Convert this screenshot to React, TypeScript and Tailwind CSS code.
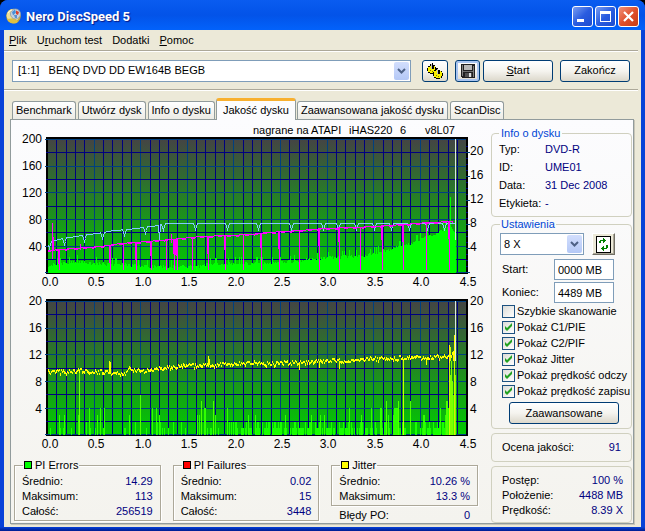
import React, { useState } from 'react';

const PLOT_W = 419;
const PLOT_H = 134;
const STEP = 9.32;

type Point = [number, number];

// small repeatable noise source, so the graphs look the same on every render
function makeNoise(seed: number) {
  let s = seed;
  return () => {
    s = (s * 16807) % 2147483647;
    return s / 2147483647;
  };
}

function interpolate(points: Point[], x: number) {
  for (let i = 1; i < points.length; i++) {
    if (x <= points[i][0]) {
      const [x0, y0] = points[i - 1];
      const [x1, y1] = points[i];
      return y0 + ((y1 - y0) * (x - x0)) / (x1 - x0);
    }
  }
  return points[points.length - 1][1];
}

const ERROR_LEVEL: Point[] = [
  [0, 6], [18, 8], [30, 10], [45, 8], [65, 7], [100, 5], [150, 5], [165, 7], [200, 8], [240, 9], [265, 12],
  [290, 14], [320, 16], [335, 20], [355, 25], [370, 30], [378, 35], [390, 38], [396, 43], [404, 44], [408, 35],
];
const READ_SPEED: Point[] = [
  [1, 103], [15, 99], [35, 96], [56, 93], [66, 91], [80, 90], [96, 88], [111, 86], [118, 84], [408, 84],
];
const READ_DIPS = [2, 17, 37, 55, 77, 98, 116, 148, 180, 211, 244, 276, 291, 309, 327, 344, 362, 380, 397];
const WRITE_SPEED: Point[] = [
  [1, 111], [26, 109], [53, 107], [73, 104], [100, 102], [123, 100], [153, 97], [180, 96], [203, 95], [220, 93],
  [253, 91], [276, 89], [306, 88], [326, 87], [356, 85], [380, 83], [406, 82],
];
const WRITE_DROPS = [12, 63, 76, 89, 104, 119, 127, 130, 145, 161, 178, 196, 214, 232, 252, 272, 292, 313, 335, 356, 379, 402];
const JITTER: Point[] = [
  [1, 71], [26, 71], [33, 69], [50, 71], [73, 73], [76, 74], [82, 68], [96, 71], [113, 67], [136, 65], [170, 64],
  [203, 62], [226, 63], [270, 60], [293, 60], [326, 58], [360, 57], [393, 56], [402, 55], [408, 50],
];
const FAILURES: Point[] = [
  [3, 1], [12, 3], [13, 1], [16, 1], [17, 3], [24, 1], [31, 3], [39, 2], [42, 4], [43, 1], [48, 1], [50, 3], [53, 4],
  [56, 1], [57, 4], [77, 1], [78, 1], [82, 3], [88, 2], [93, 6], [99, 1], [105, 4], [109, 4], [110, 2], [112, 3],
  [113, 2], [115, 1], [117, 1], [121, 1], [126, 2], [134, 2], [138, 1], [150, 3], [152, 3], [154, 5], [157, 4],
  [158, 4], [160, 1], [163, 1], [164, 1], [166, 5], [168, 3], [171, 1], [180, 4], [182, 2], [184, 2], [201, 3],
  [208, 3], [238, 3], [264, 3], [273, 3], [277, 3], [302, 4], [314, 3], [324, 4], [333, 4], [334, 4], [339, 5],
  [341, 3], [346, 3], [347, 4], [348, 4], [349, 4], [350, 4], [351, 5], [363, 5], [376, 3], [377, 3], [393, 4],
  [398, 3], [399, 5], [400, 5], [401, 4], [403, 9], [404, 11], [405, 8], [406, 6], [407, 7], [408, 9],
];

function errorBars() {
  const noise = makeNoise(77);
  let d = '';
  for (let x = 1; x < 409; x++) {
    const n = noise();
    const h = Math.round(interpolate(ERROR_LEVEL, x) + n * 4 + (n > 0.88 ? 4 : 0));
    d += `M${x + 0.5} ${PLOT_H}v-${h}`;
  }
  return d + `M403.5 ${PLOT_H}V58`;
}

function readLine() {
  let d = '';
  for (let x = 1; x < 409; x++) {
    let y = Math.round(interpolate(READ_SPEED, x));
    const dip = READ_DIPS.find((c) => Math.abs(c - x) <= 2);
    if (dip !== undefined) y += dip === x ? 6 : Math.abs(dip - x) === 1 ? 3 : 0;
    if (x === 112) y = 100;
    d += `${x === 1 ? 'M' : 'L'}${x + 0.5} ${y + 0.5}`;
  }
  return d;
}

const writeY = (x: number) => Math.round(interpolate(WRITE_SPEED, x));

function Drops() {
  return (
    <g fill="#ff00ff">
      {WRITE_DROPS.map((x, i) => (
        <g key={x}>
          <rect x={x} y={writeY(x)} width="1" height={131 - writeY(x)} />
          {i % 3 !== 2 && <rect x={x - 1} y={writeY(x)} width="1" height={i % 2 ? 18 : 15} />}
        </g>
      ))}
      <rect x="5" y="84" width="1" height="36" />
      <rect x="6" y="98" width="1" height="14" />
      <rect x="33" y="105" width="1" height="6" />
      <rect x="124" y="95" width="1" height="9" />
      <rect x="128" y="100" width="2" height="16" />
    </g>
  );
}

function WriteLine() {
  const columns = Array.from({ length: 405 }, (_, i) => i + 1);
  return (
    <g fill="#ff00ff">
      {columns.map((x) => (
        <rect key={x} x={x} y={writeY(x)} width="1" height={x % 9 < 4 ? 2 : 1} />
      ))}
    </g>
  );
}

function jitterLine() {
  const noise = makeNoise(501);
  let d = '';
  for (let x = 1; x < 406; x++) {
    const y = Math.round(interpolate(JITTER, x) + (noise() - 0.5) * 4);
    d += `M${x + 0.5} ${y - 1}v${noise() > 0.7 ? 3 : 2}`;
  }
  return d + 'M62.5 73V60M63.5 73V61M161.5 64V55M162.5 64V58M252.5 61V69M272.5 60V67M292.5 60V68M379.5 58V64';
}

const failureList: Point[] = (() => {
  const noise = makeNoise(9);
  const list: Point[] = [];
  for (let x = 184; x < 402; x++) {
    const n = noise();
    if (n > 0.76) list.push([x, 2]);
    else if (n > 0.42) list.push([x, 1]);
  }
  return [...list, ...FAILURES];
})();

const failureColor = (v: number) => (v > 6 ? '#80ff00' : v > 4 ? '#50ff00' : v > 2 ? '#30ff00' : '#18ff00');

function Grid({ id }: { id: string }) {
  const rows = Array.from({ length: 11 }, (_, i) => i);
  const cols = Array.from({ length: 44 }, (_, i) => i + 1);
  return (
    <g shapeRendering="crispEdges">
      <defs>
        <linearGradient id={id} x1="0" y1="0" x2="0" y2="1">
          <stop offset="0" stopColor="#444444" />
          <stop offset="0.5" stopColor="#228822" />
          <stop offset="1" stopColor="#00cc00" />
        </linearGradient>
      </defs>
      <rect x="-1" y="-2" width="422" height="137" fill="#000" />
      <rect x="1" y="0" width={PLOT_W - 1} height={PLOT_H} fill={`url(#${id})`} />
      {cols.map((c) => (
        <rect key={c} x={Math.round(c * STEP)} y="0" width="1" height={PLOT_H} fill={c % 5 === 0 ? '#004080' : '#000080'} />
      ))}
      {rows.map((r) => (
        <rect
          key={r}
          x={r % 2 ? -1 : -2}
          y={Math.min(Math.round(r * 13.35), 133)}
          width={r % 2 ? 420 : 421}
          height="1"
          fill={r % 2 ? '#000080' : '#004080'}
        />
      ))}
    </g>
  );
}

function AxisLabels({ left, right, rightStart, rightStep }: { left: string[]; right: string[]; rightStart: number; rightStep: number }) {
  return (
    <g fontSize="12" fill="#000">
      {left.map((t, i) => (
        <text key={t} x="-5" y={4 + i * 27} textAnchor="end">{t}</text>
      ))}
      {right.map((t, i) => (
        <text key={t} x="423" y={rightStart + i * rightStep}>{t}</text>
      ))}
      {['0.0', '0.5', '1.0', '1.5', '2.0', '2.5', '3.0', '3.5', '4.0', '4.5'].map((t, i) => (
        <text key={t} x={3 + Math.round(i * 46.4)} y="147" textAnchor="middle">{t}</text>
      ))}
    </g>
  );
}

function ErrorsChart() {
  return (
    <svg viewBox="-36 -19 480 169" className="block w-full h-auto" role="img" aria-label="PI Errors">
      <Grid id="bgErrors" />
      <g fill="none" shapeRendering="crispEdges">
        <path d={errorBars()} stroke="#00ff00" />
        <path d={readLine()} stroke="#80c8ff" />
        <WriteLine />
        <Drops />
        <path d="M408.5 0V101" stroke="#d8e8e0" />
        {Array.from({ length: 22 }, (_, i) => (
          <path key={i} d={`M419 ${133.5 - i * 6}h${i % 4 === 0 ? 4 : 2}`} stroke={i % 4 === 0 ? '#004080' : '#000080'} />
        ))}
      </g>
      <g fontSize="11" fill="#000">
        <text x="206" y="-5">nagrane na ATAPI</text>
        <text x="302" y="-5">iHAS220</text>
        <text x="353" y="-5">6</text>
        <text x="378" y="-5">v8L07</text>
      </g>
      <AxisLabels left={['200', '160', '120', '80', '40']} right={['20', '16', '12', '8', '4']} rightStart={16} rightStep={24} />
    </svg>
  );
}

function FailuresChart() {
  return (
    <svg viewBox="-36 -12 480 166" className="block w-full h-auto" role="img" aria-label="PI Failures, Jitter">
      <Grid id="bgFailures" />
      <g fill="none" shapeRendering="crispEdges">
        {failureList.map(([x, v], i) => (
          <path key={i} d={`M${x + 0.5} ${PLOT_H}V${PLOT_H - Math.round(v * 6.7)}`} stroke={failureColor(v)} />
        ))}
        <path d="M32.5 134V68" stroke="#70ff10" />
        <path d="M356.5 134V58M402.5 134V44M403.5 60V46" stroke="#c8ff00" />
        <path d="M407.5 134V34" stroke="#d0f000" />
        <path d={jitterLine()} stroke="#ffff00" />
        <path d="M402.5 62V44M407.5 60V34M406.5 60V50" stroke="#ffff00" />
        <path d="M408.5 0V60" stroke="#d8e8e0" />
      </g>
      <AxisLabels left={['20', '16', '12', '8', '4']} right={['20', '16', '12', '8', '4']} rightStart={4} rightStep={27} />
    </svg>
  );
}

function DiscLogo() {
  return (
    <svg width="16" height="16" viewBox="0 0 16 16" aria-hidden="true">
      <circle cx="7.5" cy="8" r="7.3" fill="#c8a838" />
      <circle cx="7" cy="7.5" r="6.4" fill="#f0e098" />
      <path d="M1 11a7 7 0 0 0 11 3l-3-4z" fill="#e0c040" />
      <circle cx="9.5" cy="6" r="5" fill="#c8d4e0" stroke="#8898a8" strokeWidth="0.8" />
      <path d="M6 4l3-2.5 1 3-3 3z" fill="#4890d8" />
      <path d="M10 2.5l3 1.5-1 3-2-1z" fill="#d84030" />
      <path d="M8 7l3 0 0 3-2 0z" fill="#5890d0" />
      <path d="M2 5a6 6 0 0 1 4-3" stroke="#fffbe0" fill="none" />
    </svg>
  );
}

function DiscsIcon() {
  return (
    <svg width="18" height="16" viewBox="0 0 18 16" shapeRendering="crispEdges" aria-hidden="true">
      <path d="M1 5h1V3h2V1h2V0h1v2h2v2h1v5H9v1H7v1H4v-1H2V8H1z" fill="#000" />
      <path d="M2 4h2V3h1v3h3V3h1v5H8v2H4V9H2z" fill="#f8f000" />
      <path d="M5 1h1v5H5z" fill="#c0c0c0" />
      <path d="M4 7h1v1H4zM6 8h1v1H6z" fill="#807800" />
      <path d="M7 9h1V7h2V5h2v2h2v1h2v2h1v3h-1v2h-2v1h-4v-1H8v-2H7z" fill="#000" />
      <path d="M8 8h2V7h1v4h3V8h1v1h1v4h-1v2h-5v-1H8z" fill="#f8f000" />
      <path d="M11 6h1v5h-1z" fill="#c0c0c0" />
      <path d="M10 12h1v1h-1zM12 13h1v1h-1z" fill="#807800" />
    </svg>
  );
}

function FloppyIcon() {
  return (
    <svg width="14" height="14" viewBox="0 0 14 14" shapeRendering="crispEdges" aria-hidden="true">
      <path d="M0 0h14v14H1l-1-1z" fill="#202020" />
      <path d="M1 1h1v11H1zM12 2h1v11h-1z" fill="#808080" />
      <path d="M3 1h8v5H3z" fill="#b8b8b8" />
      <path d="M2 7h10v1H2z" fill="#707070" />
      <path d="M4 9h7v4H4z" fill="#505050" />
      <path d="M8 9h2v4H8z" fill="#e0e0e0" />
    </svg>
  );
}

function RefreshIcon() {
  return (
    <svg width="15" height="17" viewBox="0 0 15 17" shapeRendering="crispEdges" aria-hidden="true">
      <rect x="0.5" y="0.5" width="14" height="16" fill="#fff" stroke="#000" />
      <path d="M3 7V5h1V4h3V2h1v1h1v1h1v1H9v1H8v1H7V5H5v2z" fill="#008000" />
      <path d="M12 9v3h-1v1H8v2H7v-1H6v-1H5v-1h1v-1h1v-1h1v2h2v-3z" fill="#008000" />
    </svg>
  );
}

function ComboArrow() {
  return (
    <span className="pointer-events-none absolute inset-y-[2px] right-[2px] flex w-[15px] items-center justify-center rounded-xs bg-linear-to-b from-[#d2defd] to-[#b4c8f6]">
      <svg width="9" height="6" viewBox="0 0 9 6" fill="none" aria-hidden="true">
        <path d="M1 1l3.5 3.5L8 1" stroke="#4d6185" strokeWidth="2" />
      </svg>
    </span>
  );
}

const xpButton =
  'flex items-center justify-center rounded-[3px] border border-[#003c74] bg-linear-to-b from-white via-[#f5f4ef] to-[#dcd8cb]';

function InfoRow({ label, value }: { label: string; value: string }) {
  return (
    <div className="flex h-[18px] items-center">
      <dt className="w-[46px]">{label}</dt>
      <dd className="text-[#000080]">{value}</dd>
    </div>
  );
}

function StatRow({ label, value }: { label: string; value: string }) {
  return (
    <div className="flex h-[15px] items-center justify-between">
      <dt>{label}</dt>
      <dd className="text-[#000080]">{value}</dd>
    </div>
  );
}

function StatGroup({ title, swatch, rows }: { title: string; swatch: string; rows: string[][] }) {
  return (
    <fieldset className="min-w-0 border border-[#aca899] px-[7px] pt-[2px] pb-px shadow-[1px_1px_0_#fff,inset_1px_1px_0_#fff]">
      <legend className="ml-px flex items-center gap-[3px] px-px leading-[14px]">
        <span className={`size-2 border border-black ${swatch}`} />
        {title}
      </legend>
      <dl>
        {rows.map(([label, value]) => (
          <StatRow key={label} label={label} value={value} />
        ))}
      </dl>
    </fieldset>
  );
}

const tabs = ['Benchmark', 'Utwórz dysk', 'Info o dysku', 'Jakość dysku', 'Zaawansowana jakość dysku', 'ScanDisc'];

export default function App() {
  const [activeTab, setActiveTab] = useState('Jakość dysku');
  const [start, setStart] = useState('0000 MB');
  const [end, setEnd] = useState('4489 MB');
  const [options, setOptions] = useState([
    { id: 'quick', name: 'Szybkie skanowanie', checked: false },
    { id: 'pie', name: 'Pokaż C1/PIE', checked: true },
    { id: 'pif', name: 'Pokaż C2/PIF', checked: true },
    { id: 'jitter', name: 'Pokaż Jitter', checked: true },
    { id: 'read', name: 'Pokaż prędkość odczy', checked: true },
    { id: 'write', name: 'Pokaż prędkość zapisu', checked: true },
  ]);

  const toggleOption = (id: string) => {
    setOptions(options.map((o) => (o.id === id ? { ...o, checked: !o.checked } : o)));
  };

  return (
    <div className="bg-black font-['Liberation_Sans',Arial,sans-serif] text-[11px] leading-[15px] text-black">
      <div className="overflow-hidden rounded-t-lg bg-[#0842d8]">
        <header className="flex h-[30px] items-center bg-linear-to-b from-[#0a5cf0] via-[#0353e8] to-[#0262fb] pr-[6px] pl-[6px] pt-[2px]">
          <DiscLogo />
          <h1 className="ml-[4px] flex-1 font-['Roboto',sans-serif] text-[13px] font-bold text-white [text-shadow:1px_1px_1px_#0a1883]">
            Nero DiscSpeed 5
          </h1>
          <div className="flex gap-[2px]">
            <button aria-label="Minimalizuj" className="size-[21px] rounded-[3px] border border-white bg-linear-to-br from-[#7a9cf0] via-[#2a5ce0] to-[#1c4cd0]">
              <svg viewBox="0 0 19 19" aria-hidden="true"><path d="M4 12h7v3H4z" fill="#fff" /></svg>
            </button>
            <button aria-label="Maksymalizuj" className="size-[21px] rounded-[3px] border border-white bg-linear-to-br from-[#7a9cf0] via-[#2a5ce0] to-[#1c4cd0]">
              <svg viewBox="0 0 19 19" aria-hidden="true"><path d="M4 4h11v11H4zM5 7v7h9V7z" fill="#fff" fillRule="evenodd" /></svg>
            </button>
            <button aria-label="Zamknij" className="size-[21px] rounded-[3px] border border-white bg-linear-to-br from-[#f09078] via-[#e0502c] to-[#c83c14]">
              <svg viewBox="0 0 19 19" aria-hidden="true"><path d="M5 5l9 9M14 5l-9 9" stroke="#fff" strokeWidth="2.2" /></svg>
            </button>
          </div>
        </header>

        <div className="mx-[4px] bg-[#ece9d8] pb-[3px]">
          <nav className="flex h-5 items-center gap-[10px] pl-[5px]">
            <button><u>P</u>lik</button>
            <button>U<u>r</u>uchom test</button>
            <button>Dodatki</button>
            <button><u>P</u>omoc</button>
          </nav>
          <hr className="mr-[3px] h-[2px] border-t border-b border-t-[#aca899] border-b-white" />

          <div className="flex h-[37px] items-center pr-[11px] pl-2">
            <div className="relative mr-[11px] min-w-0 flex-1">
              <select aria-label="Napęd" className="block h-[22px] w-full appearance-none border border-[#7f9db9] bg-white pl-[5px] outline-none">
                <option>[1:1]&nbsp;&nbsp;&nbsp;BENQ DVD DD EW164B BEGB</option>
              </select>
              <ComboArrow />
            </div>
            <button aria-label="Dyski" className={`${xpButton} mr-[7px] h-[22px] w-[26px]`}><DiscsIcon /></button>
            <button aria-label="Zapisz" className={`${xpButton} mr-[3px] h-[22px] w-[25px] shadow-[inset_0_0_0_2px_#a8c4f0]`}><FloppyIcon /></button>
            <button className={`${xpButton} mr-[7px] h-[22px] w-[70px]`}><span><u>S</u>tart</span></button>
            <button className={`${xpButton} h-[22px] w-[70px]`}>Zakończ</button>
          </div>
          <hr className="mr-[3px] h-[2px] border-t border-b border-t-[#aca899] border-b-white" />

          <div role="tablist" className="mt-2 flex h-5 items-end gap-[2px] pl-2">
            {tabs.map((tab) => (
              <button
                key={tab}
                role="tab"
                aria-selected={tab === activeTab}
                onClick={() => setActiveTab(tab)}
                className={
                  tab === activeTab
                    ? 'relative -mx-px -mb-px h-[22px] rounded-t-[3px] border border-t-[3px] border-b-0 border-[#919b9c] border-t-[#f8b030] bg-[#fcfcfe] px-[6px] whitespace-nowrap'
                    : 'h-[18px] rounded-t-[3px] border border-b-0 border-[#919b9c] bg-linear-to-b from-white to-[#ecebe5] px-[3px] whitespace-nowrap'
                }
              >
                {tab}
              </button>
            ))}
          </div>

          <main className="mr-[7px] ml-[6px] flex border border-[#919b9c] bg-linear-to-b from-[#fcfcfe] to-[#f4f3ee] shadow-[1px_1px_0_#c8c6b8]">
            <section className="min-w-0 flex-1">
              <ErrorsChart />
              <FailuresChart />
              <div className="mt-[3px] grid grid-cols-3 items-start gap-3 pr-[13px] pl-[3px]">
                <StatGroup
                  title="PI Errors"
                  swatch="bg-[#00ff00]"
                  rows={[['Średnio:', '14.29'], ['Maksimum:', '113'], ['Całość:', '256519']]}
                />
                <StatGroup
                  title="PI Failures"
                  swatch="bg-[#ff0000]"
                  rows={[['Średnio:', '0.02'], ['Maksimum:', '15'], ['Całość:', '3448']]}
                />
                <div>
                  <StatGroup
                    title="Jitter"
                    swatch="bg-[#ffff00]"
                    rows={[['Średnio:', '10.26 %'], ['Maksimum:', '13.3 %']]}
                  />
                  <dl className="px-2 pt-[2px]">
                    <StatRow label="Błędy PO:" value="0" />
                  </dl>
                </div>
              </div>
            </section>

            <aside className="w-[142px] shrink-0 pt-[6px] pr-px">
              <fieldset className="min-w-0 rounded-[4px] border border-[#d0d0bf] px-[7px] pb-1">
                <legend className="px-[2px] leading-[14px] text-[#0046d5]">Info o dysku</legend>
                <dl>
                  <InfoRow label="Typ:" value="DVD-R" />
                  <InfoRow label="ID:" value="UME01" />
                  <InfoRow label="Data:" value="31 Dec 2008" />
                  <InfoRow label="Etykieta:" value="-" />
                </dl>
              </fieldset>

              <fieldset className="min-w-0 rounded-[4px] border border-[#d0d0bf] pt-[2px] pr-[3px] pb-1 pl-[8px]">
                <legend className="px-px leading-[14px] text-[#0046d5]">Ustawienia</legend>
                <div className="flex gap-2">
                  <div className="relative w-[84px]">
                    <select aria-label="Prędkość" className="block h-[22px] w-full appearance-none border border-[#7f9db9] bg-white pl-[3px] outline-none">
                      <option>8 X</option>
                    </select>
                    <ComboArrow />
                  </div>
                  <button aria-label="Odśwież" className="flex h-[22px] w-[23px] items-center justify-center border border-t-white border-r-[#716f64] border-b-[#716f64] border-l-white bg-[#ece9d8] shadow-[inset_-1px_-1px_0_#aca899]">
                    <RefreshIcon />
                  </button>
                </div>
                <div className="mt-1 flex items-center pl-[2px]">
                  <label htmlFor="start" className="w-[52px]">Start:</label>
                  <input id="start" value={start} onChange={(e) => setStart(e.target.value)} className="h-[21px] w-[60px] border border-[#7f9db9] bg-white px-[3px] outline-none" />
                </div>
                <div className="mt-[2px] flex items-center pl-[2px]">
                  <label htmlFor="end" className="w-[52px]">Koniec:</label>
                  <input id="end" value={end} onChange={(e) => setEnd(e.target.value)} className="h-[21px] w-[60px] border border-[#7f9db9] bg-white px-[3px] outline-none" />
                </div>
                <div className="pl-[2px]">
                  {options.map((o) => (
                    <label key={o.id} className="flex h-4 items-center gap-[2px] whitespace-nowrap">
                      <span className="relative size-[13px] shrink-0">
                        <input
                          type="checkbox"
                          checked={o.checked}
                          onChange={() => toggleOption(o.id)}
                          className="block size-[13px] appearance-none border border-[#1c5180] bg-linear-to-br from-[#dcdcd7] to-white"
                        />
                        {o.checked && (
                          <svg viewBox="0 0 13 13" className="pointer-events-none absolute inset-0" aria-hidden="true">
                            <path d="M3 5v3l2 2 5-5V2L5 7z" fill="#21a121" />
                          </svg>
                        )}
                      </span>
                      {o.name}
                    </label>
                  ))}
                </div>
                <button className={`${xpButton} mt-[3px] ml-[9px] h-[22px] w-[110px]`}>Zaawansowane</button>
              </fieldset>

              <dl className="mt-1 rounded-[4px] border border-[#d0d0bf] py-[6px] pr-[10px] pl-[10px]">
                <StatRow label="Ocena jakości:" value="91" />
              </dl>
              <dl className="mt-1 rounded-[4px] border border-[#d0d0bf] pt-[6px] pr-[8px] pb-[4px] pl-[10px]">
                <StatRow label="Postęp:" value="100 %" />
                <StatRow label="Położenie:" value="4488 MB" />
                <StatRow label="Prędkość:" value="8.39 X" />
              </dl>
            </aside>
          </main>
        </div>
        <div className="h-[4px] bg-linear-to-b from-[#0842d8] to-[#001c90]" />
      </div>
    </div>
  );
}
